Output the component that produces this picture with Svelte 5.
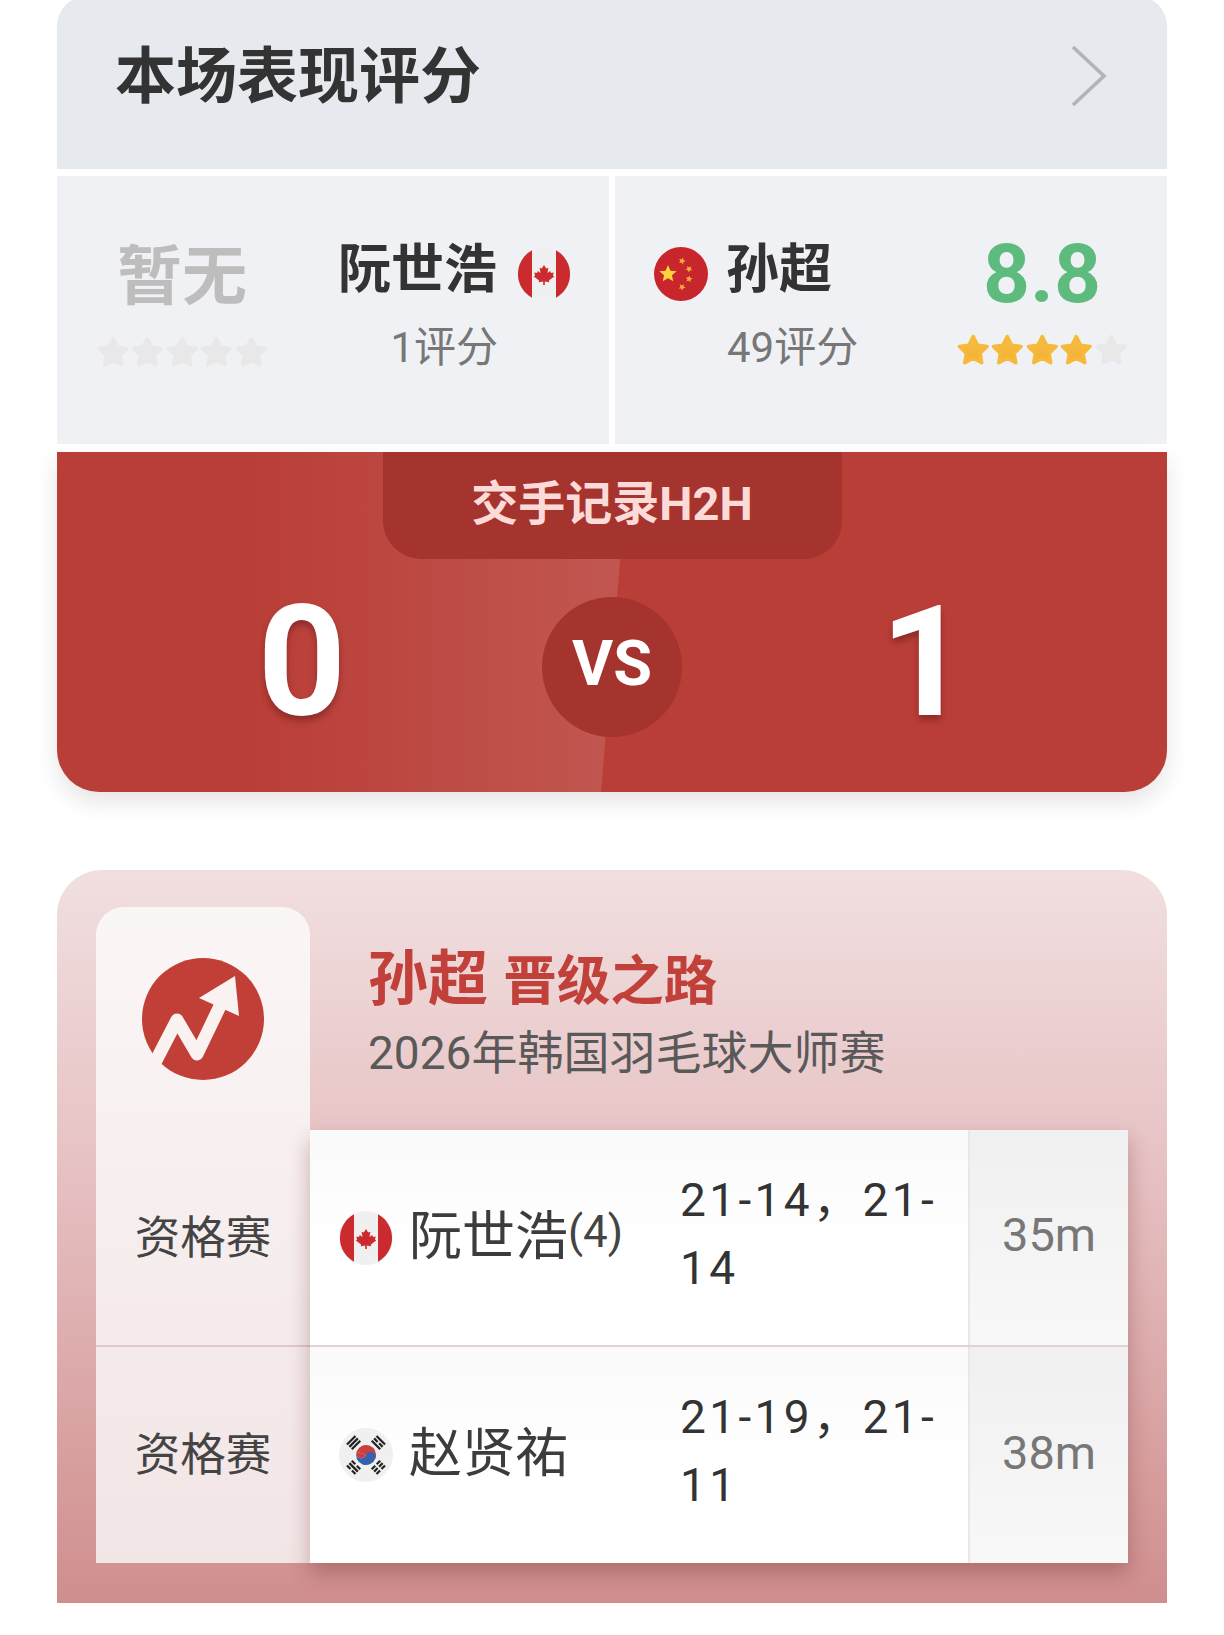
<script>
  const matches = [
    { flag: 'ca', name: '阮世浩', seed: '(4)', score: '21-14，21-14', time: '35m' },
    { flag: 'kr', name: '赵贤祐', seed: '', score: '21-19，21-11', time: '38m' }
  ];

  // five-pointed star around (cx, cy), first point up
  function starPoints(cx, cy, r, inner = 0.46, turn = 0) {
    const pts = [];
    for (let i = 0; i < 10; i++) {
      const rad = i % 2 ? r * inner : r;
      const a = ((i * 36 - 90 + turn) * Math.PI) / 180;
      pts.push(`${(cx + rad * Math.cos(a)).toFixed(2)},${(cy + rad * Math.sin(a)).toFixed(2)}`);
    }
    return pts.join(' ');
  }

  const trigrams = [
    { angle: -45, bars: [1, 1, 1] },
    { angle: 45, bars: [1, 0, 1] },
    { angle: 135, bars: [0, 0, 0] },
    { angle: 225, bars: [0, 1, 0] }
  ];
</script>

{#snippet stars(filled)}
  <div class="stars">
    {#each [0, 1, 2, 3, 4] as i}
      <svg class="star" viewBox="0 0 34 34">
        <polygon
          points={starPoints(17, 18, 14.5, 0.5)}
          fill={i < filled ? 'url(#gold)' : '#e8e8e9'}
          stroke={i < filled ? '#f6b93a' : '#e8e8e9'}
          stroke-width="3.5"
          stroke-linejoin="round"
        />
      </svg>
    {/each}
  </div>
{/snippet}

{#snippet flag(code)}
  <svg class="flag" viewBox="0 0 54 54">
    <circle cx="27" cy="27" r="27" fill={code === 'cn' ? '#c9252c' : '#f0f0f1'} />
    {#if code === 'ca'}
      <path d="M15 3.3 V50.7 A27 27 0 0 1 15 3.3Z M39 3.3 V50.7 A27 27 0 0 0 39 3.3Z" fill="#cb2a2e" />
      <path
        d="M27 18 l2.2 3.6 2.2-.9 -.9 5.2 2.7-1.8 .9 1.8 2.7-.4 -.9 3 1.3 .9 -5.3 4 .4 1.8 -4.5-.6 V38 h-1.6 v-3.4 l-4.5 .6 .4-1.8 -5.3-4 1.3-.9 -.9-3 2.7 .4 .9-1.8 2.7 1.8 -.9-5.2 2.2 .9z"
        fill="#cb2a2e"
      />
    {:else if code === 'cn'}
      <polygon points={starPoints(14, 27, 9)} fill="#fbd33f" />
      <polygon points={starPoints(28, 14, 3.6, 0.45, 20)} fill="#f5b335" />
      <polygon points={starPoints(35, 22, 3.6, 0.45, 40)} fill="#f5b335" />
      <polygon points={starPoints(35, 32, 3.6, 0.45, 10)} fill="#f5b335" />
      <polygon points={starPoints(28, 40, 3.6, 0.45, 30)} fill="#f5b335" />
    {:else}
      <g transform="rotate(20 27 27)">
        <path d="M17 27 a10 10 0 0 1 20 0z" fill="#c9403f" />
        <path d="M17 27 a10 10 0 0 0 20 0 a5 5 0 0 0 -10 0 a5 5 0 0 1 -10 0z" fill="#3561ad" />
        <path d="M27 27 a5 5 0 0 1 -10 0 h10z" fill="#c9403f" />
      </g>
      {#each trigrams as t}
        <g transform="rotate({t.angle} 27 27)">
          {#each t.bars as whole, b}
            {#if whole}
              <rect x="21" y={5 + b * 3.4} width="12" height="2.2" fill="#222" />
            {:else}
              <rect x="21" y={5 + b * 3.4} width="5" height="2.2" fill="#222" />
              <rect x="28" y={5 + b * 3.4} width="5" height="2.2" fill="#222" />
            {/if}
          {/each}
        </g>
      {/each}
    {/if}
  </svg>
{/snippet}

<svg class="defs" width="0" height="0">
  <defs>
    <linearGradient id="gold" x1="0" y1="0" x2="0" y2="1">
      <stop offset="0" stop-color="#f8c044" />
      <stop offset="1" stop-color="#f2ae36" />
    </linearGradient>
  </defs>
</svg>

<div class="page">
  <section class="rating">
    <header class="rating-head">
      <h2>本场表现评分</h2>
      <svg class="chevron" viewBox="0 0 36 62">
        <path d="M2 2 L33 31 L2 60" fill="none" stroke="#b1b3b6" stroke-width="3.6" />
      </svg>
    </header>

    <div class="players">
      <div class="player">
        <div class="mark">
          <div class="mark-value none">暂无</div>
          {@render stars(0)}
        </div>
        <div class="who who-left">
          <div class="who-name">
            <span class="name-text">阮世浩</span>
            {@render flag('ca')}
          </div>
          <div class="who-count">1评分</div>
        </div>
      </div>
      <div class="player">
        <div class="who who-right">
          <div class="who-name">
            {@render flag('cn')}
            <span class="name-text">孙超</span>
          </div>
          <div class="who-count">49评分</div>
        </div>
        <div class="mark">
          <div class="mark-value good">8.8</div>
          {@render stars(4)}
        </div>
      </div>
    </div>
  </section>

  <section class="h2h">
    <div class="sheen"></div>
    <div class="h2h-tab">交手记录H2H</div>
    <div class="h2h-score">
      <div class="num num-left">0</div>
      <div class="vs">VS</div>
      <div class="num num-right">1</div>
    </div>
  </section>

  <section class="road">
    <aside class="road-side">
      <div class="road-logo">
        <svg viewBox="0 0 122 122" class="logo">
          <circle cx="61" cy="61" r="61" fill="#c13f36" />
          <path d="M6 118 L35 62 L55 96 L79 46" fill="none" stroke="#faf1f1" stroke-width="13" stroke-linejoin="round" />
          <polygon points="93,18 57,40 97,58" fill="#faf1f1" />
        </svg>
      </div>
      {#each matches as m, i}
        <div class="round" class:split={i > 0}>资格赛</div>
      {/each}
    </aside>

    <div class="road-main">
      <div class="road-head">
        <div class="road-title"><span class="road-who">孙超</span> 晋级之路</div>
        <div class="road-sub">2026年韩国羽毛球大师赛</div>
      </div>
      <div class="table">
        {#each matches as m, i}
          <div class="row" class:split={i > 0}>
            <div class="opp">
              {@render flag(m.flag)}
              <span class="opp-name">{m.name}</span>{#if m.seed}<span class="seed">{m.seed}</span>{/if}
            </div>
            <div class="sets">{m.score}</div>
            <div class="dur">{m.time}</div>
          </div>
        {/each}
      </div>
    </div>
  </section>
</div>

<style>
  :global(body) {
    background: #fff;
  }

  .defs {
    position: absolute;
  }

  .page {
    box-sizing: border-box;
    width: 1224px;
    height: 1635px;
    padding: 0 57px;
    overflow: hidden;
    font-family: Roboto, "Noto Sans CJK SC", sans-serif;
    color: #333;
  }

  /* rating block */
  .rating-head {
    height: 173px;
    margin-top: -4px;
    padding: 0 58px;
    box-sizing: border-box;
    background: #e6e9ee;
    border-radius: 30px 30px 0 0;
    display: flex;
    align-items: center;
    justify-content: space-between;
  }

  h2 {
    margin: 0 0 12px;
    font-size: 61px;
    line-height: 80px;
    font-weight: 700;
    color: #333;
  }

  .chevron {
    width: 36px;
    height: 62px;
    margin: 0 2px 14px 0;
  }

  .players {
    display: grid;
    grid-template-columns: 552px 552px;
    gap: 6px;
    margin-top: 7px;
  }

  .player {
    height: 268px;
    background: #f0f1f5;
    display: flex;
  }

  .mark {
    width: 250px;
    padding-top: 62px;
    display: flex;
    flex-direction: column;
    align-items: center;
  }

  .mark-value {
    font-size: 65px;
    line-height: 78px;
    font-weight: 700;
  }

  .none {
    color: #bdbdbe;
  }

  .good {
    font-size: 82px;
    color: #5dbb7e;
    margin-top: -3px;
  }

  .stars {
    display: flex;
    margin-top: 19px;
  }

  .good + .stars {
    margin-top: 20px;
  }

  .star {
    width: 34.5px;
    height: 34px;
  }

  .who {
    flex: 1;
    padding-top: 61px;
  }

  .who-left {
    padding-right: 38px;
    text-align: right;
  }

  .who-right {
    padding-left: 39px;
  }

  .who-name {
    display: flex;
    align-items: center;
    gap: 20px;
    height: 74px;
    justify-content: flex-end;
  }

  .who-right .who-name {
    justify-content: flex-start;
    gap: 18px;
  }

  .who-left .who-count {
    padding-right: 73px;
  }

  .who-right .who-count {
    padding-left: 73px;
  }

  .name-text {
    font-size: 53px;
    line-height: 74px;
    font-weight: 700;
    position: relative;
    top: -4px;
  }

  .who-count {
    margin-top: 7px;
    font-size: 42px;
    line-height: 60px;
    color: #777;
  }

  .flag {
    width: 54px;
    height: 54px;
    flex: none;
  }

  /* head to head */
  .h2h {
    position: relative;
    height: 340px;
    margin-top: 8px;
    background: #b93e37;
    border-radius: 0 0 42px 42px;
    box-shadow: 0 10px 22px rgba(60, 30, 30, 0.12);
    overflow: hidden;
  }

  .sheen {
    position: absolute;
    inset: 0;
    background: linear-gradient(90deg, rgba(255, 255, 255, 0) 190px, rgba(255, 255, 255, 0.12) 544px);
    clip-path: polygon(0 0, 572px 0, 544px 100%, 0 100%);
  }

  .h2h-tab {
    position: relative;
    width: 459px;
    height: 107px;
    margin: 0 auto;
    box-sizing: border-box;
    padding-bottom: 13px;
    background: #a5342e;
    border-radius: 0 0 38px 38px;
    display: flex;
    align-items: center;
    justify-content: center;
    font-size: 47px;
    font-weight: 700;
    color: #fbdad8;
  }

  .h2h-score {
    position: relative;
    display: grid;
    grid-template-columns: 1fr 140px 1fr;
    align-items: center;
    margin-top: 38px;
  }

  .num {
    margin-top: -8px;
    font-size: 154px;
    line-height: 140px;
    font-weight: 700;
    color: #fff;
    text-align: center;
    text-shadow: 0 5px 6px rgba(90, 20, 20, 0.45);
  }

  .num-left {
    padding-left: 5px;
  }

  .vs {
    width: 140px;
    height: 140px;
    box-sizing: border-box;
    padding-bottom: 8px;
    border-radius: 50%;
    background: #a5342e;
    display: flex;
    align-items: center;
    justify-content: center;
    font-size: 63px;
    font-weight: 700;
    color: #fff;
  }

  /* road to the final */
  .road {
    margin-top: 78px;
    height: 733px;
    box-sizing: border-box;
    padding: 37px 39px 40px;
    border-radius: 45px 45px 0 0;
    background: linear-gradient(180deg, #f1dfe0, #e7c2c3 40%, #d08e8e);
    display: flex;
  }

  .road-side {
    width: 214px;
    flex: none;
    border-radius: 28px 28px 0 0;
    background: linear-gradient(180deg, #fbf6f6, #f2e5e6);
    display: flex;
    flex-direction: column;
  }

  .road-logo {
    height: 223px;
    box-sizing: border-box;
    padding: 51px 0 0 46px;
  }

  .logo {
    display: block;
    width: 122px;
    height: 122px;
  }

  .round {
    height: 215px;
    box-sizing: border-box;
    padding-bottom: 8px;
    display: flex;
    align-items: center;
    justify-content: center;
    font-size: 45.5px;
    color: #444;
  }

  .round.split {
    height: 218px;
    border-top: 2px solid #dfc8cb;
  }

  .road-main {
    flex: 1;
    min-width: 0;
    display: flex;
    flex-direction: column;
  }

  .road-head {
    height: 223px;
    box-sizing: border-box;
    padding: 37px 0 0 58px;
  }

  .road-title {
    font-size: 53.5px;
    line-height: 72px;
    font-weight: 700;
    color: #c1403a;
  }

  .road-who {
    font-size: 60px;
    margin-right: 2px;
  }

  .road-sub {
    margin-top: 5px;
    font-size: 46px;
    line-height: 60px;
    color: #595959;
  }

  .table {
    box-shadow: 0 10px 20px rgba(100, 30, 30, 0.32);
  }

  .row {
    height: 215px;
    display: flex;
    background: linear-gradient(180deg, #fafafa, #fff 55%);
  }

  .row.split {
    height: 218px;
    border-top: 2px solid #e3d2d5;
    box-sizing: border-box;
  }

  .opp {
    width: 370px;
    flex: none;
    box-sizing: border-box;
    padding-left: 29px;
    display: flex;
    align-items: center;
  }

  .opp-name {
    margin-left: 16px;
    font-size: 53px;
    color: #3c3c3c;
    position: relative;
    top: -6px;
  }

  .seed {
    font-size: 44px;
    color: #444;
    position: relative;
    top: -6px;
  }

  .sets {
    flex: 1;
    min-width: 0;
    box-sizing: border-box;
    padding: 0 26px 8px 0;
    align-self: center;
    font-size: 46px;
    line-height: 68px;
    letter-spacing: 3.4px;
    word-break: break-all;
    color: #333;
  }

  .dur {
    width: 160px;
    flex: none;
    box-sizing: border-box;
    padding-bottom: 6px;
    border-left: 2px solid #ece6e8;
    background: linear-gradient(180deg, #f0f0f1, #f8f8f8);
    display: flex;
    align-items: center;
    justify-content: center;
    font-size: 47px;
    color: #777;
  }
</style>
